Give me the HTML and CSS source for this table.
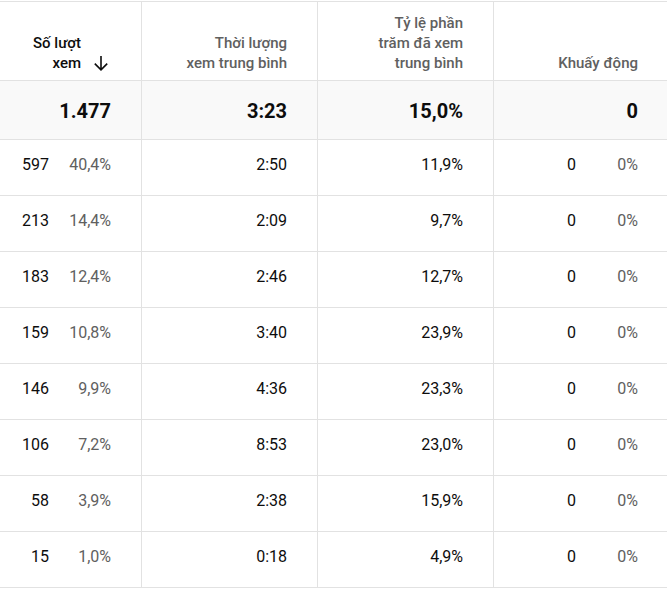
FILE: index.html
```html
<!DOCTYPE html>
<html lang="vi">
<head>
<meta charset="utf-8">
<title>Bảng số liệu</title>
<link rel="stylesheet" href="styles.css">
</head>
<body>
<div class="table">
  <div class="row head">
    <div class="cell sorted">
      <div class="htext">Số lượt<br>xem</div>
      <svg class="arrow" width="16" height="16" viewBox="0 0 16 16" aria-hidden="true"><path d="M8 1V15M1.8 8.6L8 14.8L14.2 8.6" fill="none" stroke="#0d0d0d" stroke-width="1.6"/></svg>
    </div>
    <div class="cell"><div class="htext">Thời lượng<br>xem trung bình</div></div>
    <div class="cell"><div class="htext">Tỷ lệ phần<br>trăm đã xem<br>trung bình</div></div>
    <div class="cell last"><div class="htext">Khuấy động</div></div>
  </div>
  <div class="row total">
    <div class="cell">1.477</div>
    <div class="cell">3:23</div>
    <div class="cell">15,0%</div>
    <div class="cell last">0</div>
  </div>
  <div class="row data">
    <div class="cell"><span>597</span><span class="pct">40,4%</span></div>
    <div class="cell">2:50</div><div class="cell">11,9%</div>
    <div class="cell last"><span>0</span><span class="pct">0%</span></div>
  </div>
  <div class="row data">
    <div class="cell"><span>213</span><span class="pct">14,4%</span></div>
    <div class="cell">2:09</div><div class="cell">9,7%</div>
    <div class="cell last"><span>0</span><span class="pct">0%</span></div>
  </div>
  <div class="row data">
    <div class="cell"><span>183</span><span class="pct">12,4%</span></div>
    <div class="cell">2:46</div><div class="cell">12,7%</div>
    <div class="cell last"><span>0</span><span class="pct">0%</span></div>
  </div>
  <div class="row data">
    <div class="cell"><span>159</span><span class="pct">10,8%</span></div>
    <div class="cell">3:40</div><div class="cell">23,9%</div>
    <div class="cell last"><span>0</span><span class="pct">0%</span></div>
  </div>
  <div class="row data">
    <div class="cell"><span>146</span><span class="pct">9,9%</span></div>
    <div class="cell">4:36</div><div class="cell">23,3%</div>
    <div class="cell last"><span>0</span><span class="pct">0%</span></div>
  </div>
  <div class="row data">
    <div class="cell"><span>106</span><span class="pct">7,2%</span></div>
    <div class="cell">8:53</div><div class="cell">23,0%</div>
    <div class="cell last"><span>0</span><span class="pct">0%</span></div>
  </div>
  <div class="row data">
    <div class="cell"><span>58</span><span class="pct">3,9%</span></div>
    <div class="cell">2:38</div><div class="cell">15,9%</div>
    <div class="cell last"><span>0</span><span class="pct">0%</span></div>
  </div>
  <div class="row data">
    <div class="cell"><span>15</span><span class="pct">1,0%</span></div>
    <div class="cell">0:18</div><div class="cell">4,9%</div>
    <div class="cell last"><span>0</span><span class="pct">0%</span></div>
  </div>
</div>
</body>
</html>
```

FILE: styles.css
```css
* { box-sizing: border-box; }
html, body { margin: 0; padding: 0; background: #ffffff; }
body {
  font-family: Roboto, "Noto Sans", "Liberation Sans", sans-serif;
  color: #0d0d0d;
  padding-top: 1px;
}
.table { width: 667px; overflow: hidden; }
.row {
  display: grid;
  grid-template-columns: 142px 176px 176px 1fr;
  border-bottom: 1px solid #e2e2e2;
}
.row.head { border-top: 1px solid #e2e2e2; height: 80px; }
.row.total { height: 59px; background: #f9f9f9; }
.row.data { height: 56px; }
.cell {
  border-right: 1px solid #e2e2e2;
  padding-right: 30px;
  display: flex;
  justify-content: flex-end;
  text-align: right;
}
.cell.last { border-right: none; padding-right: 29px; }
.head .cell {
  align-items: flex-end;
  padding-bottom: 7px;
  font-size: 15px;
  line-height: 20px;
  font-weight: 500;
  color: #606060;
}
.head .cell.sorted { color: #0d0d0d; padding-right: 32px; }
.arrow { margin-left: 12px; margin-bottom: 2px; flex: none; }
.total .cell {
  align-items: flex-start;
  padding-top: 18px;
  font-size: 20px;
  line-height: 24px;
  font-weight: 700;
}
.data .cell {
  align-items: flex-start;
  padding-top: 15px;
  font-size: 16px;
  line-height: 20px;
}
.pct {
  display: inline-block;
  width: 62px;
  text-align: right;
  color: #606060;
}
```
